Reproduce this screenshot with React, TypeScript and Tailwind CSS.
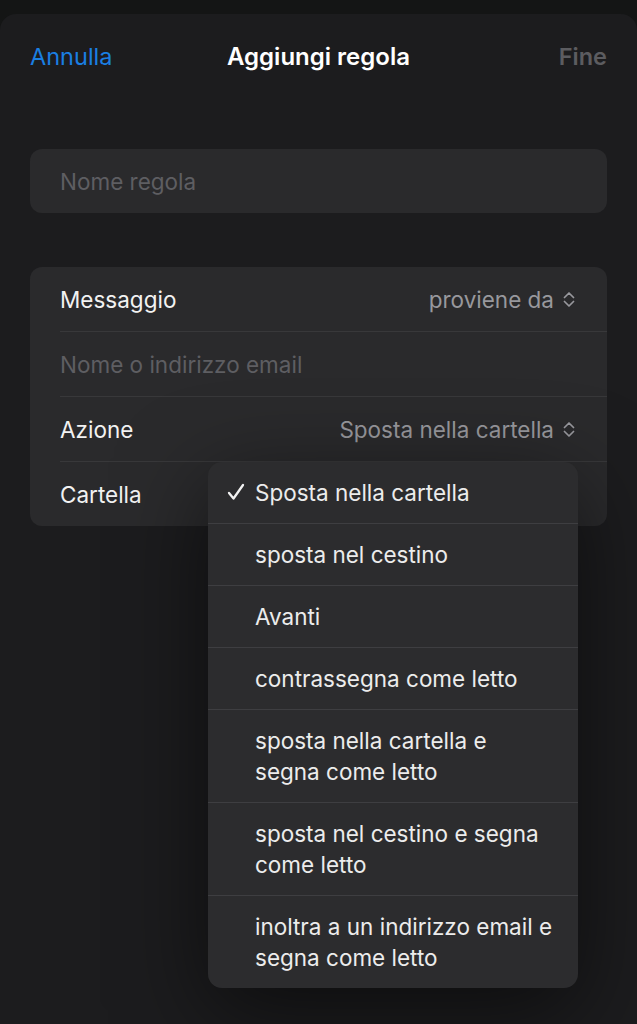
import React from 'react';

const font = { fontFamily: 'Inter, "Noto Sans", sans-serif' };

function UpDown() {
  return (
    <svg width="12" height="15" viewBox="0 0 12 15" fill="none" stroke="#98989d" strokeWidth="1.7" strokeLinecap="round" strokeLinejoin="round">
      <path d="M1.5 5.5 L6 1 L10.5 5.5" />
      <path d="M1.5 9.5 L6 14 L10.5 9.5" />
    </svg>
  );
}

function Check() {
  return (
    <svg width="18" height="18" viewBox="0 0 18 18" fill="none" stroke="#f2f2f2" strokeWidth="2.3" strokeLinecap="round" strokeLinejoin="round">
      <path d="M2 10 L6.5 15.5 L16 2" />
    </svg>
  );
}

const menuItems: { label: string[]; checked?: boolean }[] = [
  { label: ['Sposta nella cartella'], checked: true },
  { label: ['sposta nel cestino'] },
  { label: ['Avanti'] },
  { label: ['contrassegna come letto'] },
  { label: ['sposta nella cartella e', 'segna come letto'] },
  { label: ['sposta nel cestino e segna', 'come letto'] },
  { label: ['inoltra a un indirizzo email e', 'segna come letto'] },
];

export default function App() {
  return (
    <div className="relative h-[1024px] w-[637px] overflow-hidden bg-[#141515] pt-[14px]" style={font}>
      <div className="h-full rounded-t-[16px] bg-[#1c1c1e]">
        <header className="grid h-[84px] grid-cols-[1fr_auto_1fr] items-center px-[30px] pt-[1px]">
          <span className="text-[23.5px] text-[#1a7fe3]">Annulla</span>
          <span className="text-[24px] font-semibold text-white">Aggiungi regola</span>
          <span className="text-right text-[23.5px] font-semibold text-[#5c5c60]">Fine</span>
        </header>

        <div className="mt-[51px] px-[30px]">
          <div className="flex h-[64px] items-center rounded-[12px] bg-[#2a2a2c] px-[30px] pt-[2px] text-[22.5px] text-[#5e5e62]">Nome regola</div>
        </div>

        <div className="mt-[54px] px-[30px]">
          <div className="rounded-[12px] bg-[#2a2a2c] text-[22.5px]">
            <div className="flex h-[64px] items-center justify-between pl-[30px] pr-[32px] pt-[1px]">
              <span className="text-[#f2f2f2]">Messaggio</span>
              <span className="flex items-center gap-[9px] text-[#98989d]">proviene da <UpDown /></span>
            </div>
            <div className="ml-[30px] border-t border-[#38383a]" />
            <div className="flex h-[64px] items-center pl-[30px] pt-[1px] text-[#5e5e62]">Nome o indirizzo email</div>
            <div className="ml-[30px] border-t border-[#38383a]" />
            <div className="flex h-[64px] items-center justify-between pl-[30px] pr-[32px] pt-[1px]">
              <span className="text-[#f2f2f2]">Azione</span>
              <span className="flex items-center gap-[9px] text-[#98989d]">Sposta nella cartella <UpDown /></span>
            </div>
            <div className="ml-[30px] border-t border-[#38383a]" />
            <div className="flex h-[64px] items-center pl-[30px] pt-[1px]">
              <span className="text-[#f2f2f2]">Cartella</span>
            </div>
          </div>
        </div>
      </div>

      <div className="absolute left-[208px] top-[462px] w-[370px] overflow-hidden rounded-[14px] bg-[#2c2c2e] shadow-[0_24px_90px_rgba(0,0,0,0.55)]">
        {menuItems.map((item, i) => (
          <div key={i} className={i > 0 ? 'border-t border-[#3e3e41]' : ''}>
            <div className="relative py-[15px] pl-[47px] pr-[16px] text-[22.5px] leading-[31px] text-[#ececec]">
              {item.checked && (
                <span className="absolute left-[19px] top-[21px]"><Check /></span>
              )}
              {item.label.map((l, j) => (
                <div key={j} className="whitespace-nowrap">{l}</div>
              ))}
            </div>
          </div>
        ))}
      </div>
    </div>
  );
}
